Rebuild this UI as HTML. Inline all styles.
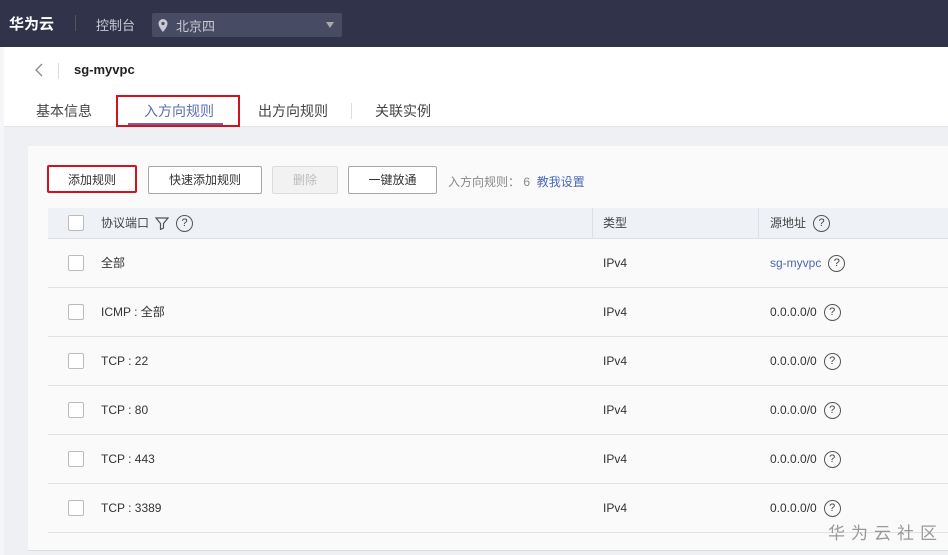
<!DOCTYPE html>
<html><head><meta charset="utf-8"><style>
*{margin:0;padding:0;box-sizing:border-box}
body{width:948px;height:555px;overflow:hidden;background:#eef0f4;font-family:"Liberation Sans","Noto Sans CJK SC",sans-serif;font-size:12px;color:#333;position:relative}
.top{position:absolute;left:0;top:0;width:948px;height:47px;background:#30334a;color:#fff}
.abs{position:absolute}
.head{position:absolute;left:4px;top:47px;width:944px;height:80px;background:#fff;border-bottom:1px solid #e3e5ea}
.strip{position:absolute;left:0;top:47px;width:4px;height:508px;background:#f5f6f8}
.panel{position:absolute;left:28px;top:146px;width:920px;height:405px;background:#fafafa;border-bottom:1px solid #ddd}
.btn{position:absolute;top:166px;height:28px;border:1px solid #a8a8a8;border-radius:2px;background:#fff;font-size:12px;line-height:26px;text-align:center;color:#333}
.th{position:absolute;left:48px;top:208px;width:900px;height:31px;background:#eef1f6;border-bottom:1px solid #dde0e6;line-height:30px}
.row{position:absolute;left:48px;width:900px;height:49px;border-bottom:1px solid #dfe1e5;font-size:12px;line-height:48px}
.row .abs,.th .abs{top:0;height:100%;display:flex;align-items:center}
.cb{position:absolute;left:20px;width:16px;height:16px;border:1px solid #bbb;background:#fff;border-radius:2px}
.q{display:inline-block;width:17px;height:17px;border:1.2px solid #555;border-radius:50%;font-size:11px;line-height:15px;text-align:center;color:#444;margin-left:7px}
</style></head><body>
<div class="top">
<div class="abs" style="left:9px;top:13px;font-size:15px;font-weight:bold">华为云</div>
<div class="abs" style="left:75px;top:15px;width:1px;height:16px;background:#555"></div>
<div class="abs" style="left:96px;top:15px;font-size:13px;color:#c8cad3">控制台</div>
<div class="abs" style="left:152px;top:13px;width:190px;height:24px;background:#474b63;border-radius:2px">
<svg class="abs" style="left:6px;top:6px" width="10" height="13" viewBox="0 0 10 13"><path d="M5 0a4.5 4.5 0 0 0-4.5 4.5C.5 8 5 13 5 13s4.5-5 4.5-8.5A4.5 4.5 0 0 0 5 0z" fill="#c8cad3"/><circle cx="5" cy="4.5" r="1.6" fill="#474b63"/></svg>
<div class="abs" style="left:24px;top:3px;font-size:13px;color:#c8cad3">北京四</div>
<div class="abs" style="left:174px;top:9px;border:4px solid transparent;border-top:6px solid #aaa"></div>
</div></div>
<div class="strip"></div>
<div class="head">
<svg class="abs" style="left:31px;top:16px" width="8" height="14"><path d="M7 1L1 7l6 6" stroke="#888" fill="none" stroke-width="1.3"/></svg>
<div class="abs" style="left:54px;top:16px;width:1px;height:16px;background:#ddd"></div>
<div class="abs" style="left:70px;top:15px;font-size:13px;font-weight:bold;color:#222">sg-myvpc</div>
<div class="abs" style="left:32px;top:54px;font-size:14px;color:#444">基本信息</div>
<div class="abs" style="left:112px;top:48px;width:124px;height:32px;border:2px solid #d0131c"></div>
<div class="abs" style="left:140px;top:54px;font-size:14px;color:#5a6fb5">入方向规则</div>
<div class="abs" style="left:124px;top:76px;width:95px;height:2px;background:#6a66a8"></div>
<div class="abs" style="left:254px;top:54px;font-size:14px;color:#444">出方向规则</div>
<div class="abs" style="left:347px;top:56px;width:1px;height:16px;background:#ddd"></div>
<div class="abs" style="left:371px;top:54px;font-size:14px;color:#444">关联实例</div>
</div>
<div class="panel"></div>
<div class="btn" style="left:47px;top:165px;width:90px;height:28px;border:2px solid #d0131c">添加规则</div>
<div class="btn" style="left:148px;width:114px">快速添加规则</div>
<div class="btn" style="left:272px;width:66px;background:#f2f2f2;border-color:#ddd;color:#bbb">删除</div>
<div class="btn" style="left:348px;width:89px">一键放通</div>
<div class="abs" style="left:448px;top:173px;color:#888">入方向规则： 6 &nbsp;<span style="color:#4b68b5">教我设置</span></div>
<div class="th">
<div class="cb" style="top:7px"></div>
<div class="abs" style="left:53px;color:#444">协议端口 <svg width="14" height="14" style="margin-left:6px" viewBox="0 0 14 14"><path d="M1 2h12L8.5 7.5V12l-3 1.5V7.5z" fill="none" stroke="#555" stroke-width="1.2"/></svg><span class="q">?</span></div>
<div class="abs" style="left:544px;width:1px;background:#dde0e6"></div>
<div class="abs" style="left:555px;color:#444">类型</div>
<div class="abs" style="left:710px;width:1px;background:#dde0e6"></div>
<div class="abs" style="left:722px;color:#444">源地址<span class="q">?</span></div>
</div>
<div class="row" style="top:239px"><div class="cb" style="top:16px"></div><div class="abs" style="left:53px">全部</div><div class="abs" style="left:555px">IPv4</div><div class="abs" style="left:722px;color:#4b68b5">sg-myvpc<span class="q">?</span></div></div>
<div class="row" style="top:288px"><div class="cb" style="top:16px"></div><div class="abs" style="left:53px">ICMP : 全部</div><div class="abs" style="left:555px">IPv4</div><div class="abs" style="left:722px">0.0.0.0/0<span class="q">?</span></div></div>
<div class="row" style="top:337px"><div class="cb" style="top:16px"></div><div class="abs" style="left:53px">TCP : 22</div><div class="abs" style="left:555px">IPv4</div><div class="abs" style="left:722px">0.0.0.0/0<span class="q">?</span></div></div>
<div class="row" style="top:386px"><div class="cb" style="top:16px"></div><div class="abs" style="left:53px">TCP : 80</div><div class="abs" style="left:555px">IPv4</div><div class="abs" style="left:722px">0.0.0.0/0<span class="q">?</span></div></div>
<div class="row" style="top:435px"><div class="cb" style="top:16px"></div><div class="abs" style="left:53px">TCP : 443</div><div class="abs" style="left:555px">IPv4</div><div class="abs" style="left:722px">0.0.0.0/0<span class="q">?</span></div></div>
<div class="row" style="top:484px"><div class="cb" style="top:16px"></div><div class="abs" style="left:53px">TCP : 3389</div><div class="abs" style="left:555px">IPv4</div><div class="abs" style="left:722px">0.0.0.0/0<span class="q">?</span></div></div>
<div class="abs" style="left:828px;top:519px;font-size:17px;color:#999;letter-spacing:6px">华为云社区</div>
</body></html>
